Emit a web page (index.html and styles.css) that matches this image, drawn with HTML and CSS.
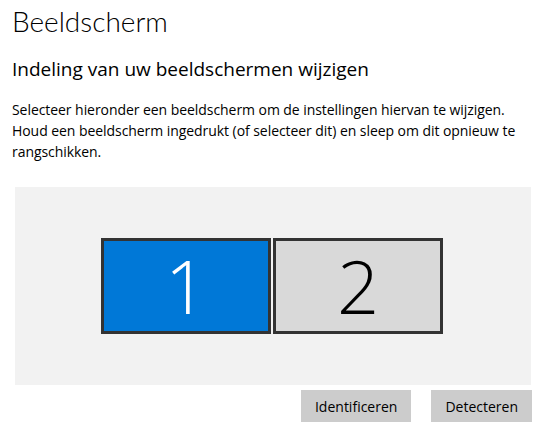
FILE: index.html
```html
<!DOCTYPE html>
<html lang="nl">
<head>
    <meta charset="UTF-8">
    <meta name="viewport" content="width=device-width, initial-scale=1.0">
    <title>Beeldscherm</title>
    <link rel="stylesheet" href="styles.css">
</head>
<body>
    <div class="page">
        <h1>Beeldscherm</h1>
        <h2>Indeling van uw beeldschermen wijzigen</h2>
        <p class="intro">Selecteer hieronder een beeldscherm om de instellingen hiervan te wijzigen. Houd een beeldscherm ingedrukt (of selecteer dit) en sleep om dit opnieuw te rangschikken.</p>

        <div class="arrangement">
            <div class="monitors">
                <div class="monitor selected">1</div>
                <div class="monitor">2</div>
            </div>
        </div>

        <div class="actions">
            <button class="btn">Identificeren</button>
            <button class="btn">Detecteren</button>
        </div>
    </div>
</body>
</html>
```

FILE: styles.css
```css
body {
    margin: 0;
    background-color: #fff;
    color: #000;
    font-family: "Open Sans", "Noto Sans", sans-serif;
}
.page {
    padding: 0 9px 0 12px;
}
h1 {
    font-family: Lato, "Open Sans", sans-serif;
    font-size: 28px;
    font-weight: 300;
    line-height: 36px;
    margin: 3px 0 0 0;
}
h2 {
    font-size: 19px;
    font-weight: 400;
    line-height: 26px;
    margin: 17px 0 0 0;
}
.intro {
    font-size: 14px;
    letter-spacing: -0.06px;
    line-height: 21px;
    margin: 17px 0 0 0;
}
.arrangement {
    margin: 25px 0 0 3px;
    width: 516px;
    height: 198px;
    background-color: #f2f2f2;
    display: flex;
    align-items: center;
    justify-content: center;
}
.monitors {
    display: flex;
    gap: 2px;
    margin-left: -2px;
}
.monitor {
    width: 164px;
    height: 90px;
    border: 3px solid #333;
    background-color: #d9d9d9;
    color: #000;
    font-size: 74px;
    font-weight: 300;
    line-height: 90px;
    text-align: center;
}
.monitor.selected {
    background-color: #0078d7;
    color: #fff;
}
.actions {
    display: flex;
    justify-content: flex-end;
    gap: 20px;
    margin-top: 5px;
}
.btn {
    height: 32px;
    padding: 0 14px;
    border: none;
    background-color: #ccc;
    color: #000;
    font-family: inherit;
    font-size: 14px;
}
```
